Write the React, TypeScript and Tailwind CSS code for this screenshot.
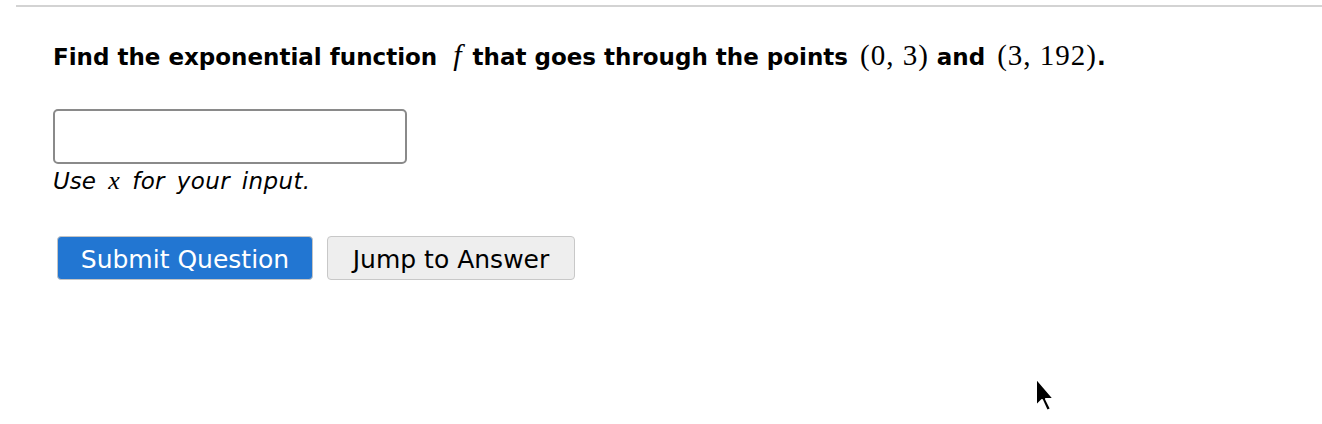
import React from "react";

const sans = { fontFamily: '"DejaVu Sans", Verdana, sans-serif' };
const mathCls = "font-['Liberation_Serif',serif] font-normal text-[29px] tracking-[1px]";

export default function App() {
  return (
    <div className="relative w-[1322px] h-[424px] overflow-hidden bg-white text-black">
      <div className="ml-4 mt-[5px] h-[2px] bg-[#d3d3d3]" />
      <div className="pl-[53px]">
        <p className="mt-[33px] text-[23px] font-bold leading-[30px] whitespace-nowrap" style={sans}>
          Find the exponential function{" "}
          <span className="ml-[8px] mr-[3px] font-['Liberation_Serif',serif] italic font-normal text-[30px]">f</span>{" "}
          that goes through the points{" "}
          <span className={`ml-[4px] ${mathCls}`}>(0, 3)</span> and{" "}
          <span className={`ml-[4px] ${mathCls}`}>(3, 192)</span>.
        </p>
        <div className="mt-[37px] w-[354px] h-[55px] rounded-[5px] border-2 border-[#8a8a8a] bg-white" />
        <p className="mt-[4px] text-[23px] italic leading-[26px] whitespace-nowrap" style={sans}>
          Use <span className="mx-[5px] font-['Liberation_Serif',serif] text-[26px]">x</span>{" "}
          <span className="tracking-[0.4px] [word-spacing:4px]">for your input.</span>
        </p>
        <div className="mt-[42px] ml-1 flex gap-[14px]">
          <button
            className="w-[256px] h-[44px] pt-[3px] rounded-[4px] border border-[#c4c4c4] bg-[#2276d2] text-white text-[25px] leading-none"
            style={sans}
          >
            Submit Question
          </button>
          <button
            className="w-[248px] h-[44px] pt-[3px] rounded-[4px] border border-[#c8c8c8] bg-[#eeeeee] text-black text-[25px] leading-none"
            style={sans}
          >
            Jump to Answer
          </button>
        </div>
      </div>
      <svg className="absolute left-[1032px] top-[376px]" width="30" height="40" viewBox="0 0 30 40">
        <path d="M4 2 L4 30 L10 24 L15 35 L19 33 L14 23 L22 23 Z" fill="black" stroke="white" strokeWidth="2" strokeLinejoin="round" />
      </svg>
    </div>
  );
}
